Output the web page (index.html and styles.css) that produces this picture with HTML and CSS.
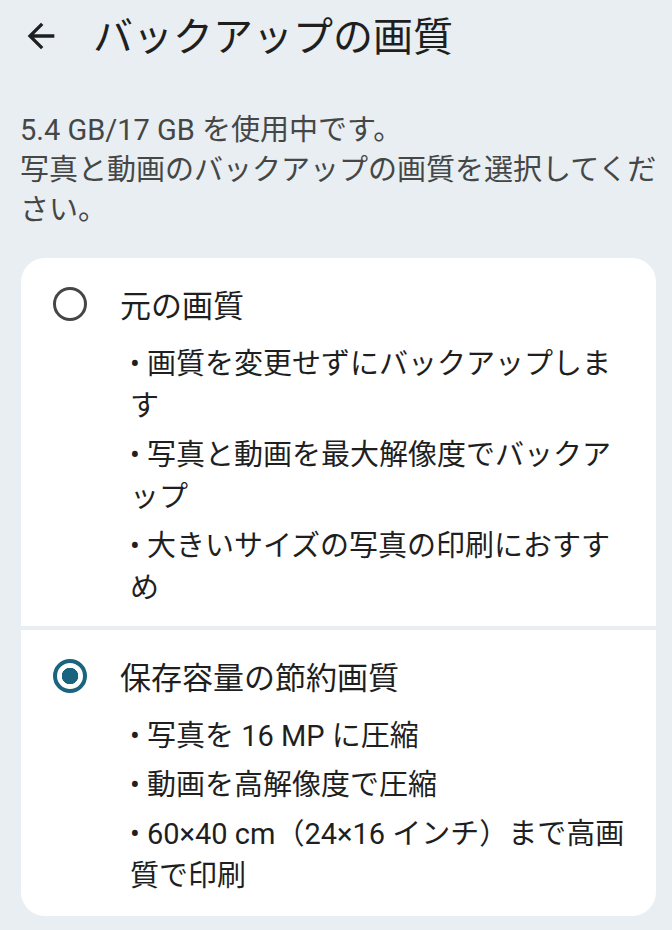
FILE: index.html
```html
<!DOCTYPE html>
<html lang="ja">

<head>
    <meta charset="UTF-8">
    <meta name="viewport" content="width=device-width, initial-scale=1.0">
    <title>バックアップの画質</title>
    <link rel="stylesheet" href="styles.css">
</head>

<body>

    <header class="topbar">
        <button class="back" aria-label="戻る">
            <svg viewBox="0 0 24 24" width="40" height="40">
                <path d="M20 11H7.83l5.59-5.59L12 4l-8 8 8 8 1.41-1.41L7.83 13H20v-2z" fill="#1f1f1f" />
            </svg>
        </button>
        <h1>バックアップの画質</h1>
    </header>

    <p class="desc">5.4 GB/17 GB を使用中です。<br>写真と動画のバックアップの画質を選択してください。</p>

    <div class="options">
        <!-- 元の画質 -->
        <div class="option">
            <div class="option-head">
                <span class="radio"></span>
                <span class="option-title">元の画質</span>
            </div>
            <ul class="points">
                <li>• 画質を変更せずにバックアップします</li>
                <li>• 写真と動画を最大解像度でバックアップ</li>
                <li>• 大きいサイズの写真の印刷におすすめ</li>
            </ul>
        </div>

        <!-- 保存容量の節約画質 -->
        <div class="option">
            <div class="option-head">
                <span class="radio checked"></span>
                <span class="option-title">保存容量の節約画質</span>
            </div>
            <ul class="points">
                <li>• 写真を 16 MP に圧縮</li>
                <li>• 動画を高解像度で圧縮</li>
                <li>• 60×40 cm（24×16 インチ）まで高画質で印刷</li>
            </ul>
        </div>
    </div>

</body>

</html>
```

FILE: styles.css
```css
body {
    margin: 0;
    background: #e8eef2;
    font-family: Roboto, "Noto Sans CJK JP", sans-serif;
    color: #1f1f1f;
}

.topbar {
    display: flex;
    align-items: center;
    height: 76px;
    padding-left: 21px;
}

.back {
    background: none;
    border: none;
    padding: 0;
    width: 40px;
    height: 40px;
    margin: -4px 32px 0 0;
}

.back svg {
    display: block;
}

h1 {
    margin: 0;
    font-size: 40px;
    font-weight: 400;
    line-height: 48px;
    color: #1f1f1f;
}

.desc {
    margin: 34px 0 0;
    padding: 0 12px 0 20px;
    font-size: 29px;
    line-height: 40px;
    color: #444746;
}

.options {
    margin: 28px 16px 0 21px;
    display: flex;
    flex-direction: column;
    gap: 4px;
    border-radius: 24px;
    overflow: hidden;
}

.option {
    background: #ffffff;
    padding: 27px 24px 17px 32px;
}

.option:last-child {
    padding-bottom: 19px;
}

.option-head {
    display: flex;
    align-items: center;
    height: 44px;
}

.radio {
    box-sizing: border-box;
    width: 34px;
    height: 34px;
    border: 3px solid #444746;
    border-radius: 50%;
    margin-right: 33px;
    margin-top: -6px;
}

.radio.checked {
    border: 4px solid #1b6480;
    background: radial-gradient(circle, #1b6480 0 8px, transparent 8.5px);
}

.option-title {
    font-size: 31px;
    line-height: 44px;
}

.points {
    list-style: none;
    margin: 14px 0 0 77px;
    padding: 0;
    font-size: 29px;
    line-height: 42px;
    color: #1f1f1f;
}

.points li {
    margin-bottom: 7px;
}

.points li:last-child {
    margin-bottom: 0;
}
```
